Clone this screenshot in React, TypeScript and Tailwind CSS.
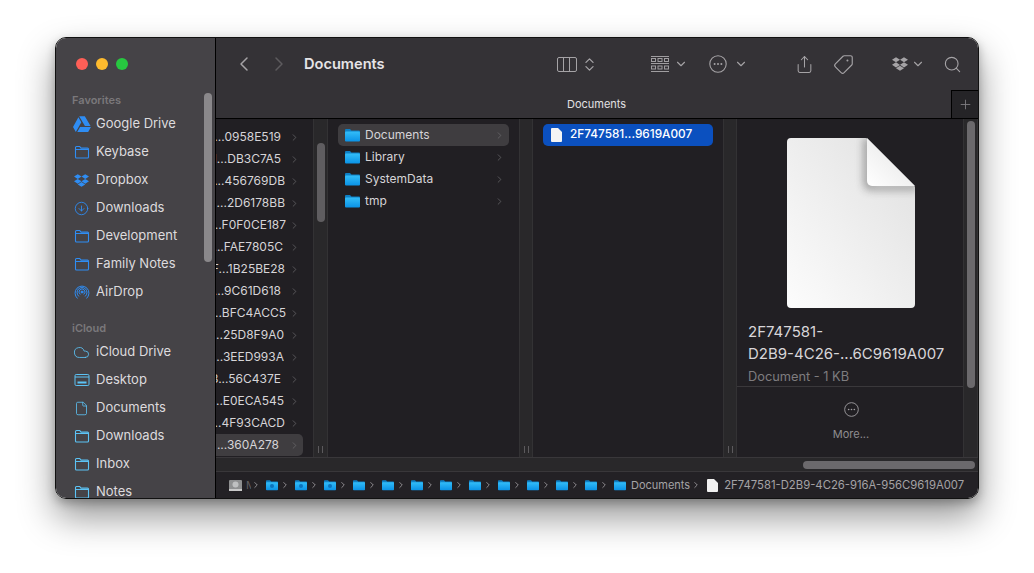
import { ChevronDown, ChevronLeft, ChevronRight, ChevronsUpDown, CircleArrowDown, Cloud, File, Plus, Search, Share, Tag } from "lucide-react"
import { FaDropbox, FaGoogleDrive } from "react-icons/fa"

function OutlineFolder({ className }: { className: string }) {
  return (
    <svg width="16" height="14" viewBox="0 0 16 14" fill="none" stroke="currentColor" strokeWidth="1.1" className={className}>
      <path d="M1.5 3.5V2.5a1 1 0 0 1 1-1h3.2l1.3 1.6h6.5a1 1 0 0 1 1 1v7.9a1 1 0 0 1-1 1H2.5a1 1 0 0 1-1-1z" />
      <path d="M1.5 4.5h13" />
    </svg>
  )
}

function DesktopIcon({ className }: { className: string }) {
  return (
    <svg width="16" height="14" viewBox="0 0 16 14" fill="none" className={className}>
      <rect x="1" y="1.5" width="14" height="11" rx="1.2" stroke="currentColor" />
      <path d="M1 4h14" stroke="currentColor" />
      <rect x="3.5" y="8.5" width="9" height="2" fill="currentColor" />
    </svg>
  )
}

function AirdropIcon({ className }: { className: string }) {
  return (
    <svg width="16" height="16" viewBox="0 0 16 16" fill="none" stroke="currentColor" strokeWidth="1" strokeLinecap="round" className={className}>
      <path d="M3.2 14.2A7 7 0 1 1 12.8 14.2" />
      <path d="M4.6 12.2A5 5 0 1 1 11.4 12.2" />
      <path d="M6 10.2A3 3 0 1 1 10 10.2" />
      <circle cx="8" cy="8" r="1" fill="currentColor" />
    </svg>
  )
}

function EllipsisCircle({ size, className }: { size: number; className: string }) {
  return (
    <svg width={size} height={size} viewBox="0 0 18 18" fill="none" className={className}>
      <circle cx="9" cy="9" r="8.2" stroke="currentColor" strokeWidth="1.1" />
      <circle cx="5.6" cy="9" r="1" fill="currentColor" />
      <circle cx="9" cy="9" r="1" fill="currentColor" />
      <circle cx="12.4" cy="9" r="1" fill="currentColor" />
    </svg>
  )
}

function BlueFolder({ id, width = 15, height = 14 }: { id: string; width?: number; height?: number }) {
  return (
    <svg width={width} height={height} viewBox="0 0 15 14" className="shrink-0">
      <defs>
        <linearGradient id={id} x1="0" y1="0" x2="0" y2="1">
          <stop offset="0" stopColor="#33bdf8" />
          <stop offset="1" stopColor="#0a92e6" />
        </linearGradient>
      </defs>
      <path d="M0 2a1 1 0 0 1 1-1h4l1.4 1.5H14a1 1 0 0 1 1 1V5H0z" fill="#0e7fc4" />
      <rect x="0" y="3.5" width="15" height="10" rx="1" fill={`url(#${id})`} />
    </svg>
  )
}

function GroupIcon() {
  return (
    <svg width="20" height="20" viewBox="0 0 20 20" fill="none" stroke="#a09ea1" strokeWidth="1">
      <path d="M1 2.5h18M1 9.5h18M1 17.5h18" />
      <rect x="1.5" y="4.5" width="4" height="3" />
      <rect x="8" y="4.5" width="4" height="3" />
      <rect x="14.5" y="4.5" width="4" height="3" />
      <rect x="1.5" y="12" width="4" height="3" />
      <rect x="8" y="12" width="4" height="3" />
      <rect x="14.5" y="12" width="4" height="3" />
    </svg>
  )
}

function BigDocument() {
  const sheet = "M5 1h74a4 4 0 0 1 3 1.2l46 46a4 4 0 0 1 1 3V167a4 4 0 0 1-4 4H5a4 4 0 0 1-4-4V5a4 4 0 0 1 4-4z"
  return (
    <svg width="130" height="172" viewBox="0 0 130 172">
      <defs>
        <linearGradient id="page" x1="1" y1="0" x2="0" y2="1">
          <stop offset="0" stopColor="#e0e0e0" />
          <stop offset="1" stopColor="#fcfcfc" />
        </linearGradient>
        <linearGradient id="fold" x1="0" y1="1" x2="1" y2="0">
          <stop offset="0" stopColor="#ffffff" />
          <stop offset="1" stopColor="#e2e2e2" />
        </linearGradient>
        <clipPath id="sheet">
          <path d={sheet} />
        </clipPath>
        <filter id="soft" x="-40%" y="-40%" width="180%" height="180%">
          <feGaussianBlur stdDeviation="4" />
        </filter>
      </defs>
      <path d={sheet} fill="url(#page)" />
      <g clipPath="url(#sheet)">
        <path d="M78 1h8v46h46v6H84a6 6 0 0 1-6-6z" fill="#5e5e5e" opacity="0.6" filter="url(#soft)" />
      </g>
      <path d="M81 1l48 48H86a5 5 0 0 1-5-5z" fill="url(#fold)" />
    </svg>
  )
}

function Track({ className, grip = true, children }: { className: string; grip?: boolean; children?: React.ReactNode }) {
  return (
    <div className={`relative shrink-0 border-x border-[#333234] bg-[#29282a] ${className}`}>
      {children}
      {grip && (
        <div className="absolute bottom-0 left-0 flex h-[16px] w-full items-center justify-center gap-[3px]">
          <div className="h-[7px] w-px bg-[#5c5a5d]" />
          <div className="h-[7px] w-px bg-[#5c5a5d]" />
        </div>
      )}
    </div>
  )
}

const favorites = [
  { label: "Google Drive", icon: <FaGoogleDrive className="text-[18px] text-[#2f8df3]" /> },
  { label: "Keybase", icon: <OutlineFolder className="text-[#2f8df3]" /> },
  { label: "Dropbox", icon: <FaDropbox className="text-[15px] text-[#2f8df3]" /> },
  { label: "Downloads", icon: <CircleArrowDown size={15} strokeWidth={1.4} className="text-[#2f8df3]" /> },
  { label: "Development", icon: <OutlineFolder className="text-[#2f8df3]" /> },
  { label: "Family Notes", icon: <OutlineFolder className="text-[#2f8df3]" /> },
  { label: "AirDrop", icon: <AirdropIcon className="text-[#2f8df3]" /> },
]

const icloud = [
  { label: "iCloud Drive", icon: <Cloud size={17} strokeWidth={1.2} className="text-[#5cc3f5]" /> },
  { label: "Desktop", icon: <DesktopIcon className="text-[#5cc3f5]" /> },
  { label: "Documents", icon: <File size={15} strokeWidth={1.3} className="text-[#5cc3f5]" /> },
  { label: "Downloads", icon: <OutlineFolder className="text-[#5cc3f5]" /> },
  { label: "Inbox", icon: <OutlineFolder className="text-[#5cc3f5]" /> },
  { label: "Notes", icon: <OutlineFolder className="text-[#5cc3f5]" /> },
]

const idRows = [
  { text: "...0958E519", end: 65 },
  { text: "1...DB3C7A5", end: 65 },
  { text: "...456769DB", end: 69 },
  { text: "...2D6178BB", end: 69 },
  { text: "...F0F0CE187", end: 70 },
  { text: "...FAE7805C", end: 67 },
  { text: "F...1B25BE28", end: 69 },
  { text: "...9C61D618", end: 65 },
  { text: "...BFC4ACC5", end: 70 },
  { text: "...25D8F9A0", end: 68 },
  { text: "...3EED993A", end: 68 },
  { text: "3...56C437E", end: 65 },
  { text: "...E0ECA545", end: 68 },
  { text: "...4F93CACD", end: 69 },
  { text: "...360A278", end: 63 },
]

function SidebarSection({ title, items }: { title: string; items: { label: string; icon: React.ReactNode }[] }) {
  return (
    <div className="flex flex-col">
      <div className="pl-[16px] text-[11px] leading-[14px] font-semibold text-[#7a787b]">{title}</div>
      <div className="mt-[3px] flex flex-col">
        {items.map((item) => (
          <div key={item.label} className="flex h-[28px] items-center">
            <div className="flex w-[40px] shrink-0 justify-center pl-[11px]">{item.icon}</div>
            <span className="text-[13px] text-[#dddbde]">{item.label}</span>
          </div>
        ))}
      </div>
    </div>
  )
}

export default function App() {
  return (
    <div className="h-[573px] w-[1034px] overflow-hidden bg-white pt-[37px] pl-[55px] font-[Inter,sans-serif]">
      <div className="flex h-[462px] w-[924px] overflow-hidden rounded-[11px] border border-[#111] shadow-[0_4px_10px_rgba(0,0,0,0.25),0_18px_36px_rgba(0,0,0,0.42)]">
        {/* Sidebar */}
        <aside className="relative flex w-[160px] shrink-0 flex-col border-r border-black bg-[#454347]">
          <div className="flex gap-[8px] pt-[20px] pl-[20px]">
            <div className="h-[12px] w-[12px] rounded-full bg-[#fe5f57]" />
            <div className="h-[12px] w-[12px] rounded-full bg-[#febb2e]" />
            <div className="h-[12px] w-[12px] rounded-full bg-[#27c840]" />
          </div>
          <div className="mt-[23px] flex flex-col gap-[15px]">
            <SidebarSection title="Favorites" items={favorites} />
            <SidebarSection title="iCloud" items={icloud} />
          </div>
          <div className="absolute top-[55px] right-[3px] h-[169px] w-[8px] rounded-full bg-[#8a888b]" />
        </aside>

        <div className="flex min-w-0 flex-1 flex-col">
          {/* Toolbar */}
          <header className="flex h-[52px] shrink-0 items-center bg-[#343236] text-[#a5a3a6]">
            <ChevronLeft size={24} strokeWidth={1.5} className="ml-[16px]" />
            <ChevronRight size={24} strokeWidth={1.5} className="ml-[11px] text-[#5d5b5e]" />
            <h1 className="mt-[2px] ml-[13px] text-[14.6px] font-semibold text-[#e6e4e7]">Documents</h1>
            <div className="ml-[172px] flex h-[15px] w-[20px] rounded-[2px] border border-[#a5a3a6]">
              <div className="flex-1 border-r border-[#a5a3a6]" />
              <div className="flex-1 border-r border-[#a5a3a6]" />
              <div className="flex-1" />
            </div>
            <ChevronsUpDown size={17} strokeWidth={1.8} className="ml-[4px]" />
            <div className="ml-[52px]"><GroupIcon /></div>
            <ChevronDown size={14} strokeWidth={1.9} className="ml-[4px]" />
            <EllipsisCircle size={18} className="ml-[21px]" />
            <ChevronDown size={14} strokeWidth={1.9} className="ml-[7px]" />
            <Share size={19} strokeWidth={1.3} className="ml-[47px]" />
            <Tag size={21} strokeWidth={1.3} className="ml-[19px] -scale-x-100" />
            <FaDropbox className="ml-[38px] text-[16px]" />
            <ChevronDown size={14} strokeWidth={1.9} className="ml-[3px]" />
            <Search size={19} strokeWidth={1.4} className="ml-[18px]" />
          </header>

          {/* Tab bar */}
          <div className="flex h-[29px] shrink-0 border-b border-black bg-[#343236]">
            <div className="flex-1 pt-[7px] pl-[351px] text-[11px] leading-[14px] text-[#e2e0e3]">Documents</div>
            <div className="flex w-[27px] items-center justify-center border-t border-l border-black bg-[#252427]">
              <Plus size={15} strokeWidth={1.4} className="text-[#807e81]" />
            </div>
          </div>

          {/* Columns */}
          <div className="flex h-[338px] shrink-0 bg-[#211f23]">
            <div className="flex w-[97px] shrink-0 flex-col pt-[7px]">
              {idRows.map((row, i) => (
                <div key={row.text} className={`relative flex h-[22px] w-[87px] items-center rounded-r-[5px] ${i === 14 ? "bg-[#3f3d40]" : ""}`}>
                  <div className="flex shrink-0 justify-end overflow-hidden" style={{ width: row.end }}>
                    <span className="shrink-0 text-[12px] whitespace-nowrap text-[#d6d4d7]">{row.text}</span>
                  </div>
                  <ChevronRight size={11} strokeWidth={1.5} className="absolute right-[3px] text-[#6f6d70]" />
                </div>
              ))}
            </div>
            <Track className="w-[15px]">
              <div className="absolute top-[24px] left-[3px] h-[79px] w-[8px] rounded-full bg-[#5f5d60]" />
            </Track>

            <div className="flex w-[191px] shrink-0 flex-col px-[10px] pt-[5px]">
              {["Documents", "Library", "SystemData", "tmp"].map((name, i) => (
                <div key={name} className={`flex h-[22px] items-center rounded-[5px] pr-[4px] pl-[7px] ${i === 0 ? "bg-[#3f3d40]" : ""}`}>
                  <BlueFolder id={`folder-${i}`} />
                  <span className="ml-[5px] flex-1 text-[12px] text-[#d6d4d7]">{name}</span>
                  <ChevronRight size={11} strokeWidth={1.5} className="text-[#6f6d70]" />
                </div>
              ))}
            </div>
            <Track className="w-[14px]" />

            <div className="flex w-[190px] shrink-0 flex-col px-[10px] pt-[5px]">
              <div className="flex h-[22px] items-center rounded-[5px] bg-[#0b50bf] pl-[8px]">
                <svg width="11" height="14" viewBox="0 0 11 14" className="shrink-0">
                  <path d="M1 0h6l4 4v9a1 1 0 0 1-1 1H1a1 1 0 0 1-1-1V1a1 1 0 0 1 1-1z" fill="#f4f4f4" />
                </svg>
                <span className="ml-[8px] text-[11.8px] font-medium text-white">2F747581...9619A007</span>
              </div>
            </div>
            <Track className="w-[14px]" />

            {/* Preview */}
            <div className="flex w-[226px] shrink-0 flex-col">
              <div className="flex justify-center pt-[18px] pl-[2px]"><BigDocument /></div>
              <div className="mt-[12px] pl-[11px] text-[15px] leading-[22px] text-[#d8d6d9]">
                <div>2F747581-</div>
                <div className="whitespace-nowrap">D2B9-4C26-...6C9619A007</div>
              </div>
              <div className="mt-[4px] border-b border-[#3a383b] pb-[2px] pl-[11px] text-[12.8px] leading-[15px] text-[#7e7c7f]">Document - 1 KB</div>
              <div className="flex flex-col items-center pt-[15px] pl-[2px]">
                <EllipsisCircle size={15} className="text-[#a09ea1]" />
                <div className="mt-[9px] text-[11px] text-[#8f8d90]">More...</div>
              </div>
            </div>
            <Track className="w-[15px]" grip={false}>
              <div className="absolute top-[2px] left-[3px] h-[267px] w-[8px] rounded-full bg-[#6b696c]" />
            </Track>
          </div>

          {/* Horizontal scroller */}
          <div className="flex h-[15px] shrink-0 items-center justify-end border-y border-[#39373a] bg-[#29282a] pr-[3px]">
            <div className="h-[8px] w-[172px] rounded-full bg-[#6b696c]" />
          </div>

          {/* Path bar */}
          <footer className="flex flex-1 items-center bg-[#232125] pl-[13px] text-[11px] whitespace-nowrap text-[#a5a3a6]">
            <svg width="13" height="13" viewBox="0 0 13 13" className="shrink-0">
              <rect x="0" y="1" width="13" height="11" rx="1" fill="#8f9091" />
              <circle cx="6.5" cy="5.5" r="3" fill="#bfc0c1" />
              <rect x="0" y="10" width="13" height="2" fill="#c9c9c9" />
            </svg>
            <span className="ml-[4px] w-[5px] shrink-0 overflow-hidden text-[#5f5d60]">M</span>
            <ChevronRight size={10} strokeWidth={2} className="shrink-0 text-[#a09ea1]" />
            {Array.from({ length: 12 }).map((_, i) => (
              <div key={i} className="flex shrink-0 items-center">
                <div className="relative ml-[5px] flex">
                  <BlueFolder id={`crumb-${i}`} width={12} height={12} />
                  {i < 3 && <div className="absolute top-[5px] left-[4px] h-[4px] w-[4px] rounded-full bg-[#0b74bd]" />}
                </div>
                <ChevronRight size={10} strokeWidth={2} className="ml-[2px] shrink-0 text-[#a09ea1]" />
              </div>
            ))}
            <div className="ml-[5px] flex shrink-0"><BlueFolder id="crumb-last" width={12} height={12} /></div>
            <span className="ml-[5px]">Documents</span>
            <ChevronRight size={10} strokeWidth={2} className="ml-[1px] shrink-0 text-[#a09ea1]" />
            <svg width="11" height="13" viewBox="0 0 11 13" className="ml-[6px] shrink-0">
              <path d="M1 0h6l4 4v8a1 1 0 0 1-1 1H1a1 1 0 0 1-1-1V1a1 1 0 0 1 1-1z" fill="#f0f0f0" />
            </svg>
            <span className="ml-[6px] text-[11.3px]">2F747581-D2B9-4C26-916A-956C9619A007</span>
          </footer>
        </div>
      </div>
    </div>
  )
}
